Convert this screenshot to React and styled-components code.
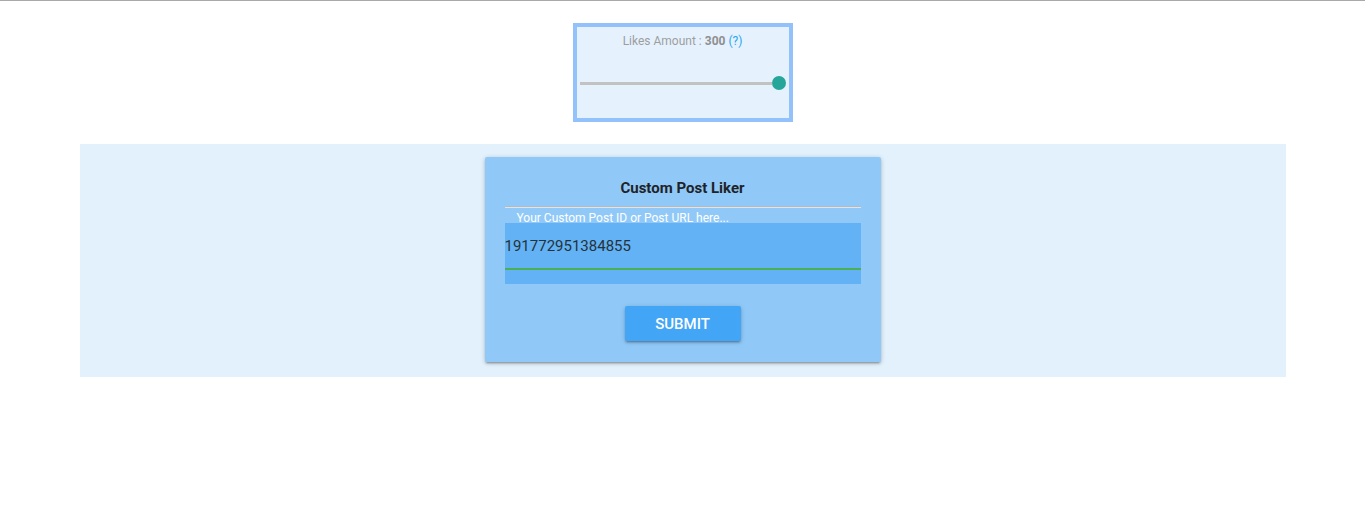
import styled, { createGlobalStyle } from "styled-components";

const GlobalStyle = createGlobalStyle`
  html, body {
    margin: 0;
    padding: 0;
    background: #ffffff;
    font-family: Roboto, "Liberation Sans", sans-serif;
  }
`;

const Page = styled.div`
  border-top: 1px solid #a9a9a9;
  padding-top: 22px;
  display: flex;
  flex-direction: column;
  align-items: center;
`;

const AmountBox = styled.div`
  box-sizing: border-box;
  width: 220px;
  height: 99px;
  border: 4px solid #92c1fc;
  background: #e5f2fe;
  padding: 6px 3px 0;
  display: flex;
  flex-direction: column;
`;

const AmountLabel = styled.div`
  text-align: center;
  font-size: 12px;
  line-height: 16px;
  color: #9e9e9e;
  b {
    font-weight: 700;
    color: #8f8f8f;
  }
  span {
    color: #2aa6f0;
  }
`;

const Slider = styled.div`
  margin-top: 27px;
  display: flex;
  align-items: center;
  height: 14px;
`;

const Track = styled.div`
  flex: 1;
  height: 3px;
  background: #c2c2c2;
`;

const Thumb = styled.div`
  width: 14px;
  height: 14px;
  border-radius: 50%;
  background: #26a69a;
`;

const Band = styled.section`
  width: 1206px;
  margin-top: 22px;
  background: #e3f1fc;
  padding: 13px 0 15px;
  display: flex;
  justify-content: center;
`;

const Card = styled.div`
  box-sizing: border-box;
  width: 396px;
  background: #90c9f8;
  border-radius: 2px;
  padding: 21px 20px 21px;
  box-shadow: 0 2px 2px 0 rgba(0, 0, 0, 0.14), 0 3px 1px -2px rgba(0, 0, 0, 0.12),
    0 1px 5px 0 rgba(0, 0, 0, 0.2);
  display: flex;
  flex-direction: column;
`;

const Title = styled.h3`
  margin: 0;
  text-align: center;
  font-size: 15px;
  line-height: 20px;
  font-weight: 700;
  color: #1f2328;
`;

const Divider = styled.div`
  margin-top: 8px;
  height: 1px;
  background: #b9b9b9;
  border-bottom: 1px solid #d6e6f3;
`;

const FieldLabel = styled.label`
  display: block;
  height: 15px;
  padding-left: 12px;
  font-size: 12px;
  line-height: 20px;
  color: #ffffff;
  white-space: nowrap;
`;

const Field = styled.div`
  background: #62b2f5;
  padding-bottom: 14px;
`;

const Input = styled.input`
  box-sizing: border-box;
  display: block;
  width: 100%;
  height: 47px;
  margin: 0;
  padding: 0;
  border: none;
  border-bottom: 2px solid #4caf50;
  background: transparent;
  font-family: Roboto, "Liberation Sans", sans-serif;
  font-size: 15px;
  color: #263238;
  outline: none;
`;

const Button = styled.button`
  align-self: center;
  margin-top: 22px;
  width: 116px;
  height: 35px;
  border: none;
  border-radius: 2px;
  background: #42a5f5;
  color: #ffffff;
  font-family: Roboto, "Liberation Sans", sans-serif;
  font-size: 15px;
  font-weight: 500;
  text-transform: uppercase;
  box-shadow: 0 2px 2px 0 rgba(0, 0, 0, 0.14), 0 3px 1px -2px rgba(0, 0, 0, 0.12),
    0 1px 5px 0 rgba(0, 0, 0, 0.2);
  cursor: pointer;
`;

export default function App() {
  return (
    <>
      <GlobalStyle />
      <Page>
        <AmountBox>
          <AmountLabel>
            Likes Amount : <b>300</b> <span>(?)</span>
          </AmountLabel>
          <Slider>
            <Track />
            <Thumb />
          </Slider>
        </AmountBox>
        <Band>
          <Card>
            <Title>Custom Post Liker</Title>
            <Divider />
            <FieldLabel htmlFor="postId">Your Custom Post ID or Post URL here...</FieldLabel>
            <Field>
              <Input id="postId" defaultValue="191772951384855" />
            </Field>
            <Button>Submit</Button>
          </Card>
        </Band>
      </Page>
    </>
  );
}
